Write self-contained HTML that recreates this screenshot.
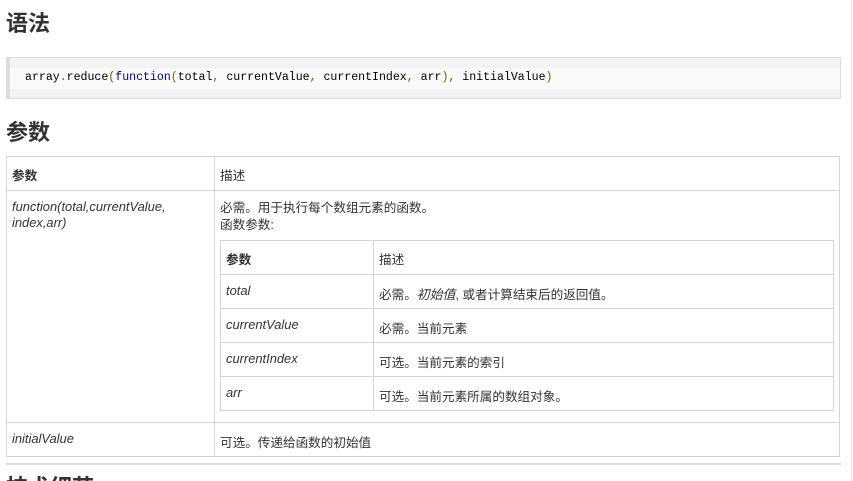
<!DOCTYPE html>
<html><head><meta charset="utf-8"><style>
*{margin:0;padding:0;box-sizing:border-box}
html{height:481px;overflow:hidden}
body{width:853px;height:481px;overflow:hidden;background:#fff;position:relative;font-family:"Liberation Sans","Noto Sans CJK SC",sans-serif;font-size:12.6px;color:#333}
.a{position:absolute;white-space:nowrap}
h1{position:absolute;font-size:22px;font-weight:bold;color:#333;line-height:24px;font-family:"Liberation Sans","Noto Sans CJK SC",sans-serif}
.code{position:absolute;left:6px;top:57px;width:835px;height:42px;background:#f3f3f3;border:1px solid #ddd;border-left:4px solid #ddd}
.band{position:absolute;left:0;right:0;top:10px;height:21px;background:#fafafa}
.mono{position:absolute;left:15px;top:12px;font-family:"Liberation Mono",monospace;font-size:11.57px;color:#000;line-height:16px;white-space:nowrap}
.b{position:absolute;border:1px solid #d4d4d4}
.h{position:absolute;background:#d4d4d4}
i{font-style:italic;font-size:12.9px}
</style></head><body>
<h1 style="left:6px;top:12px">语法</h1>
<div class="code"><div class="band"></div><div class="mono">array<span style="color:#660">.</span>reduce<span style="color:#660">(</span><span style="color:#008">function</span><span style="color:#660">(</span>total<span style="color:#660">,</span> currentValue<span style="color:#660">,</span> currentIndex<span style="color:#660">,</span> arr<span style="color:#660">),</span> initialValue<span style="color:#660">)</span></div></div>
<h1 style="left:6px;top:121px">参数</h1>

<div class="b" style="left:6px;top:156px;width:834px;height:301px"></div>
<div class="h" style="left:6px;top:190px;width:834px;height:1px"></div>
<div class="h" style="left:6px;top:422px;width:834px;height:1px"></div>
<div class="h" style="left:214px;top:156px;width:1px;height:301px"></div>

<div class="a" style="left:12px;top:165px;font-weight:bold">参数</div>
<div class="a" style="left:220px;top:165px">描述</div>
<div class="a" style="left:12px;top:199px;line-height:16px"><i>function(total,currentValue,<br>index,arr)</i></div>
<div class="a" style="left:220px;top:200px;line-height:17px">必需。用于执行每个数组元素的函数。<br>函数参数:</div>

<div class="b" style="left:220px;top:240px;width:614px;height:171px"></div>
<div class="h" style="left:220px;top:274px;width:614px;height:1px"></div>
<div class="h" style="left:220px;top:308px;width:614px;height:1px"></div>
<div class="h" style="left:220px;top:342px;width:614px;height:1px"></div>
<div class="h" style="left:220px;top:376px;width:614px;height:1px"></div>
<div class="h" style="left:373px;top:240px;width:1px;height:171px"></div>

<div class="a" style="left:226px;top:249px;font-weight:bold">参数</div>
<div class="a" style="left:379px;top:249px">描述</div>
<div class="a" style="left:226px;top:283px"><i>total</i></div>
<div class="a" style="left:379px;top:284px">必需。<i>初始值</i>, 或者计算结束后的返回值。</div>
<div class="a" style="left:226px;top:317px"><i>currentValue</i></div>
<div class="a" style="left:379px;top:318px">必需。当前元素</div>
<div class="a" style="left:226px;top:351px"><i>currentIndex</i></div>
<div class="a" style="left:379px;top:352px">可选。当前元素的索引</div>
<div class="a" style="left:226px;top:385px"><i>arr</i></div>
<div class="a" style="left:379px;top:386px">可选。当前元素所属的数组对象。</div>

<div class="a" style="left:12px;top:431px"><i>initialValue</i></div>
<div class="a" style="left:220px;top:432px">可选。传递给函数的初始值</div>

<div class="h" style="left:6px;top:463px;width:835px;height:2px;background:#ddd"></div>
<div style="position:absolute;left:0;top:470px;width:200px;height:11px;overflow:hidden"><h1 style="left:6px;top:6px">技术细节</h1></div>
<div class="h" style="left:851px;top:0;width:1px;height:481px;background:#e6e6e6"></div>
</body></html>
